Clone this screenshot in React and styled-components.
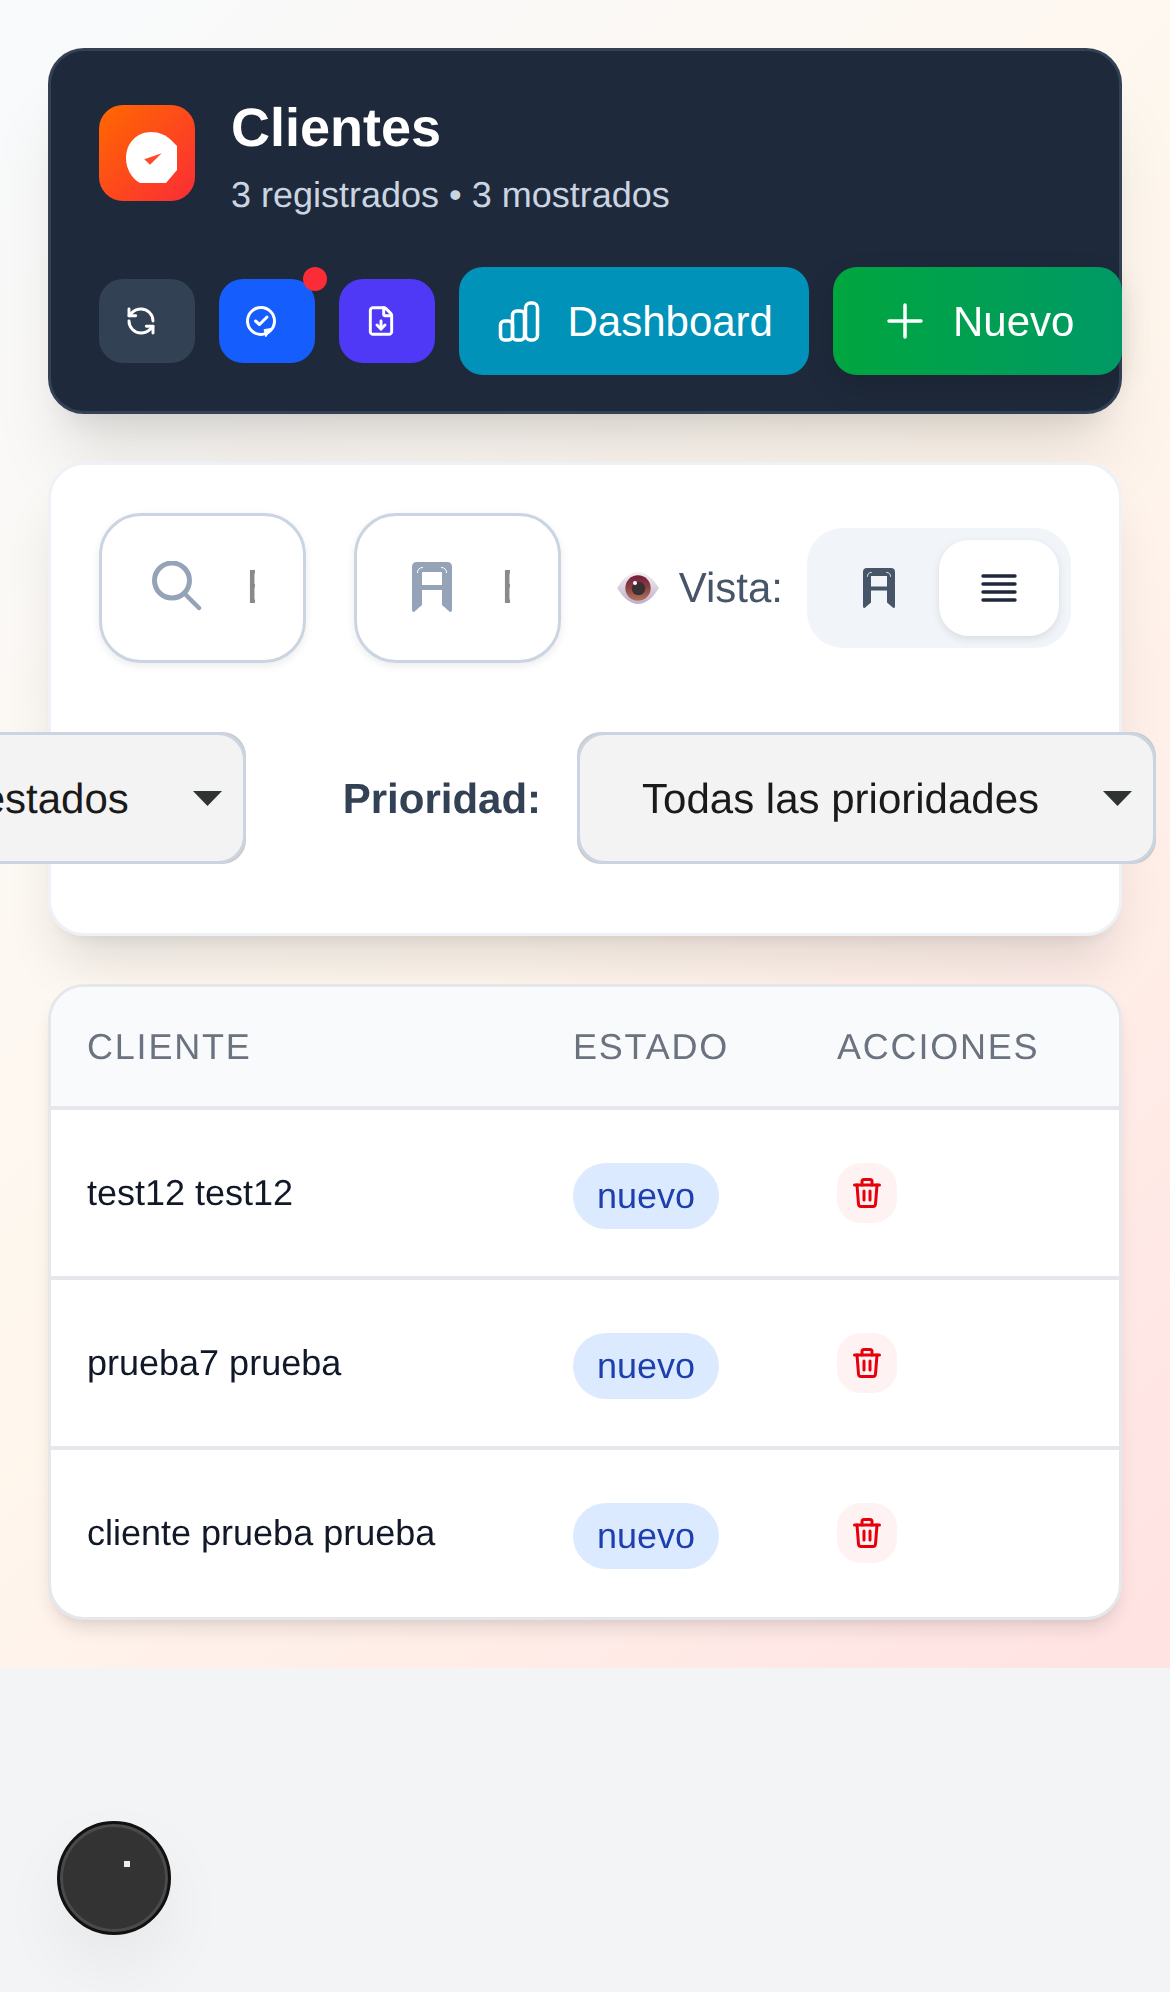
import React from 'react';
import styled, { createGlobalStyle } from 'styled-components';
import { RefreshCcw, FileDown } from 'lucide-react';

const GlobalStyle = createGlobalStyle`
  html, body {
    margin: 0;
    padding: 0;
    background-color: #f3f4f6;
    font-family: "Liberation Sans", Arial, sans-serif;
    text-rendering: geometricPrecision;
    overflow-x: hidden;
  }
  * {
    box-sizing: border-box;
  }
`;

const Page = styled.div`
  padding: 48px;
  display: flex;
  flex-direction: column;
  gap: 48px;
  will-change: opacity;
  background: linear-gradient(135deg, #f8fafc 0%, #fff7ed 50%, #ffe2e2 100%);
`;

/* header */
const Header = styled.header`
  padding: 36px 48px;
  background-color: #1e293b;
  border: 3px solid #334155;
  border-radius: 36px;
  box-shadow: 0 60px 75px -15px rgba(0, 0, 0, 0.1), 0 24px 30px -18px rgba(0, 0, 0, 0.1);
`;

const TitleRow = styled.div`
  display: flex;
  align-items: center;
  gap: 36px;
  margin-bottom: 48px;
`;

const Logo = styled.div`
  width: 96px;
  height: 96px;
  flex-shrink: 0;
  display: flex;
  align-items: center;
  justify-content: center;
  padding: 9px 0 0 9px;
  border-radius: 24px;
  background: linear-gradient(135deg, #ff6900, #fb2c36);
`;

const Title = styled.h1`
  margin: -1px 0 1px;
  font-size: 54px;
  line-height: 84px;
  font-weight: 700;
  color: #fff;
`;

const Subtitle = styled.p`
  margin: 0;
  font-size: 36px;
  line-height: 48px;
  color: #cbd5e1;
`;

const Actions = styled.div`
  display: flex;
  align-items: center;
  gap: 24px;
`;

const IconButton = styled.button`
  position: relative;
  width: 96px;
  height: 84px;
  flex-shrink: 0;
  padding: 0 0 0 ${(p) => p.$pad}px;
  display: flex;
  align-items: center;
  border: 0;
  border-radius: 24px;
  color: #fff;
  background-color: ${(p) => p.$bg};
`;

const Dot = styled.span`
  position: absolute;
  top: -12px;
  right: -12px;
  width: 24px;
  height: 24px;
  border-radius: 50%;
  background-color: #fb2c36;
`;

const TextButton = styled.button`
  height: 108px;
  flex-shrink: 0;
  padding: 0 ${(p) => p.$pad}px;
  display: flex;
  align-items: center;
  gap: 24px;
  border: 0;
  border-radius: 24px;
  font-family: inherit;
  font-size: 42px;
  color: #fff;
  background: ${(p) => p.$bg};
  box-shadow: ${(p) => p.$shadow || 'none'};
`;

const ButtonLabel = styled.span`
  padding-top: 2px;
`;

/* filtros */
const FilterCard = styled.section`
  padding: 48px 48px 69px;
  background-color: #fff;
  border: 3px solid #eef2f7;
  border-radius: 36px;
  box-shadow: 0 36px 54px -12px rgba(0, 0, 0, 0.12), 0 12px 18px -12px rgba(0, 0, 0, 0.1);
`;

const TopRow = styled.div`
  display: flex;
  align-items: center;
  gap: 48px;
`;

const SearchBox = styled.label`
  width: 207px;
  height: 150px;
  flex-shrink: 0;
  padding: 0 47px 3px 49px;
  display: flex;
  align-items: center;
  gap: 44px;
  border: 3px solid #cbd5e1;
  border-radius: 42px;
  background-color: #fff;
  box-shadow: 0 3px 9px rgba(0, 0, 0, 0.08);
`;

const IconSlot = styled.span`
  width: 51px;
  height: 51px;
  flex-shrink: 0;
  display: flex;
  align-items: center;
  justify-content: center;
`;

const SearchInput = styled.input`
  width: 9px;
  padding: 0;
  border: 0;
  outline: 0;
  font-family: inherit;
  font-size: 48px;
  background: transparent;
  &::placeholder {
    color: #8a8a8a;
    opacity: 1;
  }
`;

const ViewGroup = styled.div`
  margin-left: auto;
  display: flex;
  align-items: center;
`;

const ViewLabel = styled.span`
  margin: 0 24px 0 20px;
  font-size: 42px;
  color: #475569;
`;

const Toggle = styled.div`
  display: flex;
  padding: 12px;
  border-radius: 36px;
  background-color: #f1f5f9;
`;

const ToggleButton = styled.button`
  width: 120px;
  height: 96px;
  padding: 0;
  display: flex;
  align-items: center;
  justify-content: center;
  border: 0;
  border-radius: 30px;
  background-color: ${(p) => (p.$active ? '#fff' : 'transparent')};
  box-shadow: ${(p) => (p.$active ? '0 3px 9px rgba(0, 0, 0, 0.1)' : 'none')};
`;

const FilterRow = styled.div`
  margin: 69px -85px 0 0;
  display: flex;
  justify-content: flex-end;
  gap: 97px;
  white-space: nowrap;
`;

const FilterGroup = styled.div`
  display: flex;
  align-items: center;
  flex-shrink: 0;
  gap: 36px;
`;

const FilterLabel = styled.span`
  padding-top: 2px;
  font-size: 42px;
  font-weight: 700;
  color: #334155;
`;

const SelectFrame = styled.div`
  border-radius: 24px;
  background-color: #cacaca;
`;

const SelectBox = styled.div`
  height: 132px;
  padding: 0 21px 0 62px;
  display: flex;
  align-items: center;
  gap: ${(p) => p.$gap}px;
  border: 3px solid #cbd5e1;
  border-radius: 28px;
  font-size: 42px;
  color: #1a1a1a;
  background-color: #f3f3f4;
`;

const SelectText = styled.span`
  padding-top: 2px;
`;

/* tabla */
const TableCard = styled.section`
  overflow: hidden;
  background-color: #fff;
  border: 3px solid #e5e7eb;
  border-radius: 36px;
  box-shadow: 0 12px 18px -3px rgba(0, 0, 0, 0.1), 0 6px 12px -6px rgba(0, 0, 0, 0.08);
`;

const HeadRow = styled.div`
  display: grid;
  grid-template-columns: 486px 264px 1fr;
  background-color: #f9fafb;
  border-bottom: 4px solid #e5e7eb;
`;

const HeadCell = styled.div`
  padding: 36px 36px 35px;
  font-size: 36px;
  line-height: 48px;
  letter-spacing: 1.8px;
  text-transform: uppercase;
  color: #6b7280;
`;

const Row = styled.div`
  height: ${(p) => (p.$last ? 167 : 170)}px;
  padding-top: 53px;
  display: grid;
  grid-template-columns: 486px 264px 1fr;
  align-items: start;
  border-bottom: ${(p) => (p.$last ? '0' : '4px solid #e5e7eb')};
`;

const Cell = styled.div`
  padding: 0 36px;
  font-size: 36px;
  line-height: 60px;
  color: #111827;
`;

const Badge = styled.span`
  display: inline-block;
  padding: 6px 24px;
  border-radius: 999px;
  font-size: 36px;
  line-height: 54px;
  color: #1e40af;
  background-color: #dbeafe;
`;

const DeleteButton = styled.button`
  width: 60px;
  height: 60px;
  padding: 0;
  display: flex;
  align-items: center;
  justify-content: center;
  border: 0;
  border-radius: 24px;
  background-color: #fef2f2;
`;

const FloatButton = styled.button`
  position: fixed;
  left: 57px;
  bottom: 57px;
  width: 114px;
  height: 114px;
  padding: 0;
  border: 3px solid #111;
  border-radius: 50%;
  background-color: #333;
  box-shadow: inset 0 0 0 3px #4a4a4a, 0 30px 75px -9px rgba(0, 0, 0, 0.08);
`;

const FloatDot = styled.span`
  position: absolute;
  left: 64px;
  top: 37px;
  width: 6px;
  height: 6px;
  background-color: #eee;
`;

const LogoIcon = () => (
  <svg width="51" height="51" viewBox="0 0 51 51">
    <path
      fill="#fff"
      d="M25 0C33 0 40 3 45 8L51 14V38L40 51H14C5 46 0 36 0 26C0 11 11 0 25 0Z"
    />
    <path fill="#ff4a2e" d="M35.7 21.3L18.3 27.3L24 32.7Z" />
  </svg>
);

const ChatCheckIcon = () => (
  <svg width="36" height="36" viewBox="0 0 36 36" fill="none" stroke="#fff" strokeWidth="3" strokeLinecap="round" strokeLinejoin="round">
    <circle cx="18" cy="18" r="13.5" />
    <path d="M12.5 18L16.5 21.5L24 14" />
    <path fill="#fff" strokeWidth="1" d="M21.5 26.5L28.5 25.5L23 33.5Z" />
  </svg>
);

const BarsIcon = () => (
  <svg width="48" height="48" viewBox="1 0 48 48" fill="none" stroke="#fff" strokeWidth="3.5" strokeLinejoin="round">
    <rect x="5.5" y="24" width="12" height="19" rx="4" />
    <rect x="17.5" y="14" width="12" height="29" rx="4" />
    <rect x="30.5" y="6" width="12" height="37" rx="5" />
  </svg>
);

const PlusIcon = () => (
  <svg width="48" height="48" viewBox="0 0 48 48" fill="none" stroke="#fff" strokeWidth="3.5" strokeLinecap="round">
    <path d="M24 8V40M8 24H40" />
  </svg>
);

const SearchIcon = () => (
  <svg width="51" height="51" viewBox="0 0 51 51" fill="none" stroke="#94a3b8">
    <circle cx="21" cy="19.5" r="17.5" strokeWidth="5" />
    <path d="M35.5 34.5L48 47" strokeWidth="4.5" strokeLinecap="round" />
  </svg>
);

// el icono raro en forma de A, se usa en el filtro y en el toggle
const ArchIcon = ({ color, width, height }) => (
  <svg width={width} height={height} viewBox="0 0 40 50">
    <path
      fill={color}
      fillRule="evenodd"
      d="M5 0H35Q40 0 40 5V48Q40 50 38 50L30 43V28H10V43L2 50Q0 50 0 48V5Q0 0 5 0ZM10 10V23H30V10Z"
    />
    <path fill="none" stroke="#fff" strokeWidth="1" d="M5.5 11Q5.5 5.5 11 5.5M34.5 11Q34.5 5.5 29 5.5" />
  </svg>
);

const ListIcon = () => (
  <svg width="36" height="36" viewBox="0 0 36 36" stroke="#1e293b" strokeWidth="3.4" strokeLinecap="round">
    <path d="M2 6H34M2 14H34M2 22H34M2 30H34" />
  </svg>
);

const EyeIcon = () => (
  <svg width="42" height="32" viewBox="0 0 42 32">
    <defs>
      <linearGradient id="sclera" x1="0" y1="0" x2="0" y2="1">
        <stop offset="0" stopColor="#f4f0f5" />
        <stop offset="1" stopColor="#bfaecb" />
      </linearGradient>
      <linearGradient id="iris" x1="0" y1="0" x2="0" y2="1">
        <stop offset="0" stopColor="#741b3c" />
        <stop offset="0.45" stopColor="#8a3f3f" />
        <stop offset="1" stopColor="#b0715a" />
      </linearGradient>
    </defs>
    <path fill="url(#sclera)" d="M0 16C7 5 14 0 21 0C28 0 35 5 42 16C35 27 28 32 21 32C14 32 7 27 0 16Z" />
    <circle cx="21" cy="16" r="12.7" fill="url(#iris)" />
    <circle cx="21.5" cy="16.5" r="6.8" fill="#3a2f33" />
    <circle cx="18" cy="11" r="2" fill="#fff" />
  </svg>
);

const CaretIcon = () => (
  <svg width="29" height="15" viewBox="0 0 29 15">
    <path fill="#2f3333" d="M0 0H29L14.5 15Z" />
  </svg>
);

const TrashIcon = () => (
  <svg width="28" height="30" viewBox="0 0 28 30" fill="none" stroke="#e7000b" strokeWidth="3" strokeLinecap="round" strokeLinejoin="round">
    <path d="M1.5 7H26.5" />
    <path d="M9 7V3.5Q9 1.5 11 1.5H17Q19 1.5 19 3.5V7" />
    <path d="M4 7L5.5 26Q5.7 28.5 8 28.5H20Q22.3 28.5 22.5 26L24 7" />
    <path d="M11 13V22M17 13V22" />
  </svg>
);

const clients = ['test12 test12', 'prueba7 prueba', 'cliente prueba prueba'];

const App = () => {
  return (
    <Page>
      <GlobalStyle />

      <Header>
        <TitleRow>
          <Logo>
            <LogoIcon />
          </Logo>
          <div>
            <Title>Clientes</Title>
            <Subtitle>3 registrados • 3 mostrados</Subtitle>
          </div>
        </TitleRow>
        <Actions>
          <IconButton $bg="#334155" $pad={26}>
            <RefreshCcw size={32} strokeWidth={2.2} />
          </IconButton>
          <IconButton $bg="#155dfc" $pad={24}>
            <ChatCheckIcon />
            <Dot />
          </IconButton>
          <IconButton $bg="#4f39f6" $pad={26}>
            <FileDown size={32} strokeWidth={2.2} />
          </IconButton>
          <TextButton $bg="#0092b8" $pad={36.5}>
            <BarsIcon />
            <ButtonLabel>Dashboard</ButtonLabel>
          </TextButton>
          <TextButton
            $bg="linear-gradient(90deg, #00a63e, #009966)"
            $pad={47.5}
            $shadow="0 12px 30px rgba(0, 0, 0, 0.12)"
          >
            <PlusIcon />
            <ButtonLabel>Nuevo</ButtonLabel>
          </TextButton>
        </Actions>
      </Header>

      <FilterCard>
        <TopRow>
          <SearchBox>
            <IconSlot>
              <SearchIcon />
            </IconSlot>
            <SearchInput placeholder="Buscar..." />
          </SearchBox>
          <SearchBox>
            <IconSlot>
              <ArchIcon color="#94a3b8" width={40} height={50} />
            </IconSlot>
            <SearchInput placeholder="Buscar..." />
          </SearchBox>
          <ViewGroup>
            <EyeIcon />
            <ViewLabel>Vista:</ViewLabel>
            <Toggle>
              <ToggleButton>
                <ArchIcon color="#475569" width={32} height={40} />
              </ToggleButton>
              <ToggleButton $active>
                <ListIcon />
              </ToggleButton>
            </Toggle>
          </ViewGroup>
        </TopRow>
        <FilterRow>
          <FilterGroup>
            <FilterLabel>Estado:</FilterLabel>
            <SelectFrame>
              <SelectBox $gap={64}>
                <SelectText>Todos los estados</SelectText>
                <CaretIcon />
              </SelectBox>
            </SelectFrame>
          </FilterGroup>
          <FilterGroup>
            <FilterLabel>Prioridad:</FilterLabel>
            <SelectFrame>
              <SelectBox $gap={64}>
                <SelectText>Todas las prioridades</SelectText>
                <CaretIcon />
              </SelectBox>
            </SelectFrame>
          </FilterGroup>
        </FilterRow>
      </FilterCard>

      <TableCard>
        <HeadRow>
          <HeadCell>Cliente</HeadCell>
          <HeadCell>Estado</HeadCell>
          <HeadCell>Acciones</HeadCell>
        </HeadRow>
        {clients.map((name, i) => (
          <Row key={name} $last={i === clients.length - 1}>
            <Cell>{name}</Cell>
            <Cell>
              <Badge>nuevo</Badge>
            </Cell>
            <Cell>
              <DeleteButton>
                <TrashIcon />
              </DeleteButton>
            </Cell>
          </Row>
        ))}
      </TableCard>

      <FloatButton>
        <FloatDot />
      </FloatButton>
    </Page>
  );
};

export default App;
